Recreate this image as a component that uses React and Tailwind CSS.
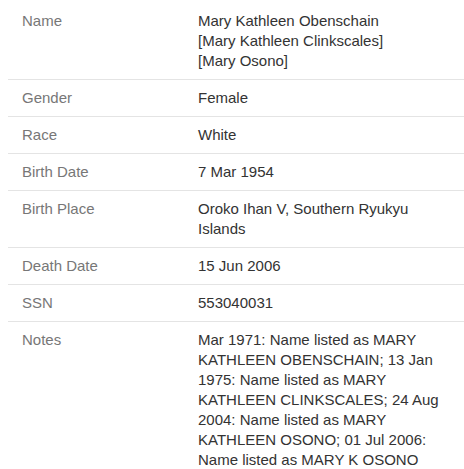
import React from 'react';

const rows = [
  {
    label: 'Name',
    value: (
      <>
        Mary Kathleen Obenschain
        <br />
        [Mary Kathleen Clinkscales]
        <br />
        [Mary Osono]
      </>
    ),
  },
  { label: 'Gender', value: 'Female' },
  { label: 'Race', value: 'White' },
  { label: 'Birth Date', value: '7 Mar 1954' },
  { label: 'Birth Place', value: 'Oroko Ihan V, Southern Ryukyu Islands' },
  { label: 'Death Date', value: '15 Jun 2006' },
  { label: 'SSN', value: '553040031' },
  {
    label: 'Notes',
    value:
      'Mar 1971: Name listed as MARY KATHLEEN OBENSCHAIN; 13 Jan 1975: Name listed as MARY KATHLEEN CLINKSCALES; 24 Aug 2004: Name listed as MARY KATHLEEN OSONO; 01 Jul 2006: Name listed as MARY K OSONO',
  },
];

export default function App() {
  return (
    <div className="w-[464px] h-[469px] overflow-hidden bg-white pl-2 font-['Liberation_Sans',Arial,sans-serif] text-[15px] leading-[20px]">
      {rows.map((row, i) => (
        <div
          key={row.label}
          className={
            'flex pl-[14px] pb-2 ' +
            (i === 0 ? 'pt-[11px] ' : 'pt-2 ') +
            (i < rows.length - 1 ? 'border-b border-[#e4e4e4]' : '')
          }
        >
          <div className="w-[176px] shrink-0 text-[#777777]">{row.label}</div>
          <div className="w-[248px] text-[#333333]">{row.value}</div>
        </div>
      ))}
    </div>
  );
}
